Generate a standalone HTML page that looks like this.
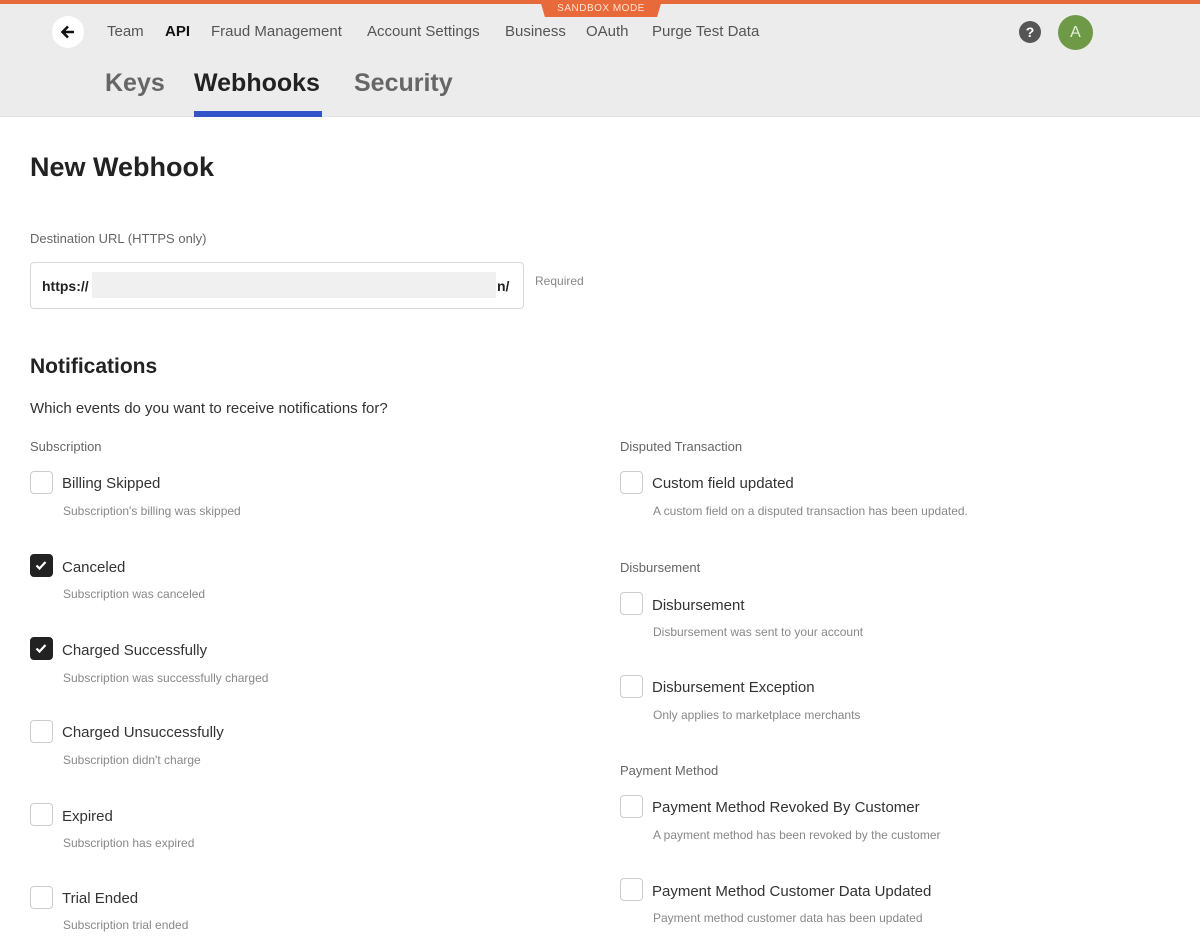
<!DOCTYPE html>
<html><head><meta charset="utf-8"><style>
*{margin:0;padding:0;box-sizing:border-box}
body{width:1200px;height:944px;overflow:hidden;background:#fff;font-family:"Liberation Sans",sans-serif;color:#222;position:relative}
.a{position:absolute;white-space:nowrap}
.hdr{position:absolute;left:0;top:0;width:1200px;height:117px;background:#ececec;border-bottom:1px solid #e2e2e2}
.bar{position:absolute;left:0;top:0;width:1200px;height:4px;background:#e8693a}
.sb{position:absolute;left:540px;top:0;width:122px;height:17px;background:#e8693a;clip-path:polygon(0 0,100% 0,96% 100%,4% 100%);color:#fde3d6;font-size:10px;letter-spacing:.5px;text-align:center;line-height:17px}
.nav{font-size:15px;color:#555;top:23px}
.tab{font-size:25px;color:#666;top:69px;font-weight:bold}
.cb{position:absolute;left:30px;width:23px;height:23px;border:1.5px solid #ccc;border-radius:4px;background:#fff}
.cb.on{background:#222;border-color:#222}
.lab{font-size:15px;color:#333}
.sub{font-size:12px;color:#888}
.sec{font-size:13px;color:#666}
</style></head><body>
<div class="hdr"></div><div class="bar"></div><div class="sb">SANDBOX MODE</div>
<div class="a" style="left:52px;top:16px;width:32px;height:32px;border-radius:50%;background:#fff"></div>
<svg class="a" style="left:58px;top:22px" width="20" height="20" viewBox="0 0 20 20"><path d="M16 10H5M10 4.5L4.5 10 10 15.5" stroke="#111" stroke-width="2.6" fill="none"/></svg>
<div class="a nav" style="left:107px">Team</div>
<div class="a nav" style="left:165px;color:#111;font-weight:bold">API</div>
<div class="a nav" style="left:211px">Fraud Management</div>
<div class="a nav" style="left:367px">Account Settings</div>
<div class="a nav" style="left:505px">Business</div>
<div class="a nav" style="left:586px">OAuth</div>
<div class="a nav" style="left:652px">Purge Test Data</div>
<div class="a" style="left:1019px;top:21px;width:22px;height:22px;border-radius:50%;background:#555;color:#fff;font-weight:bold;font-size:14px;text-align:center;line-height:22px">?</div>
<div class="a" style="left:1058px;top:15px;width:35px;height:35px;border-radius:50%;background:#6e9a47;color:#e8f0dd;font-size:16px;text-align:center;line-height:35px">A</div>
<div class="a tab" style="left:105px">Keys</div>
<div class="a tab" style="left:194px;color:#222">Webhooks</div>
<div class="a tab" style="left:354px">Security</div>
<div class="a" style="left:194px;top:111px;width:128px;height:6px;background:#3353c9"></div>

<div class="a" style="left:30px;top:152px;font-size:27px;font-weight:bold">New Webhook</div>
<div class="a sec" style="left:30px;top:231px">Destination URL (HTTPS only)</div>
<div class="a" style="left:30px;top:262px;width:494px;height:47px;border:1px solid #d8d8d8;border-radius:4px"></div>
<div class="a" style="left:42px;top:278px;font-size:14px;font-weight:bold;color:#222">https://</div>
<div class="a" style="left:92px;top:272px;width:404px;height:26px;background:#f0f0f0"></div>
<div class="a" style="left:497px;top:278px;font-size:14px;font-weight:bold">n/</div>
<div class="a sub" style="left:535px;top:274px">Required</div>
<div class="a" style="left:30px;top:355px;font-size:21px;font-weight:bold">Notifications</div>
<div class="a" style="left:30px;top:400px;font-size:15px;color:#333">Which events do you want to receive notifications for?</div>

<div class="a sec" style="left:30px;top:439px">Subscription</div>
<div class="cb" style="top:471px"></div><div class="a lab" style="left:62px;top:475px">Billing Skipped</div><div class="a sub" style="left:63px;top:504px">Subscription's billing was skipped</div>
<div class="cb on" style="top:554px"><svg width="20" height="20" viewBox="0 0 20 20"><path d="M5.5 10.5l3 3 6-6.5" stroke="#fff" stroke-width="2.2" fill="none"/></svg></div><div class="a lab" style="left:62px;top:559px">Canceled</div><div class="a sub" style="left:63px;top:587px">Subscription was canceled</div>
<div class="cb on" style="top:637px"><svg width="20" height="20" viewBox="0 0 20 20"><path d="M5.5 10.5l3 3 6-6.5" stroke="#fff" stroke-width="2.2" fill="none"/></svg></div><div class="a lab" style="left:62px;top:642px">Charged Successfully</div><div class="a sub" style="left:63px;top:671px">Subscription was successfully charged</div>
<div class="cb" style="top:720px"></div><div class="a lab" style="left:62px;top:724px">Charged Unsuccessfully</div><div class="a sub" style="left:63px;top:753px">Subscription didn't charge</div>
<div class="cb" style="top:803px"></div><div class="a lab" style="left:62px;top:808px">Expired</div><div class="a sub" style="left:63px;top:836px">Subscription has expired</div>
<div class="cb" style="top:886px"></div><div class="a lab" style="left:62px;top:890px">Trial Ended</div><div class="a sub" style="left:63px;top:918px">Subscription trial ended</div>

<div class="a sec" style="left:620px;top:439px">Disputed Transaction</div>
<div class="cb" style="left:620px;top:471px"></div><div class="a lab" style="left:652px;top:475px">Custom field updated</div><div class="a sub" style="left:653px;top:504px">A custom field on a disputed transaction has been updated.</div>
<div class="a sec" style="left:620px;top:560px">Disbursement</div>
<div class="cb" style="left:620px;top:592px"></div><div class="a lab" style="left:652px;top:597px">Disbursement</div><div class="a sub" style="left:653px;top:625px">Disbursement was sent to your account</div>
<div class="cb" style="left:620px;top:675px"></div><div class="a lab" style="left:652px;top:679px">Disbursement Exception</div><div class="a sub" style="left:653px;top:708px">Only applies to marketplace merchants</div>
<div class="a sec" style="left:620px;top:763px">Payment Method</div>
<div class="cb" style="left:620px;top:795px"></div><div class="a lab" style="left:652px;top:799px">Payment Method Revoked By Customer</div><div class="a sub" style="left:653px;top:828px">A payment method has been revoked by the customer</div>
<div class="cb" style="left:620px;top:878px"></div><div class="a lab" style="left:652px;top:883px">Payment Method Customer Data Updated</div><div class="a sub" style="left:653px;top:911px">Payment method customer data has been updated</div>
</body></html>
